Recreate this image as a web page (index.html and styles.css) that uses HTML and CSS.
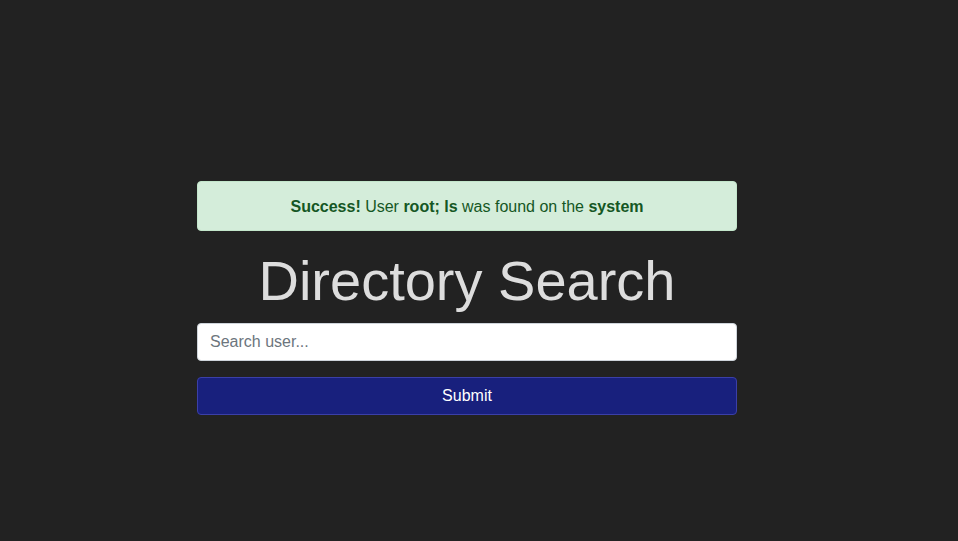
FILE: index.html
```html
<!DOCTYPE html>
<html lang="en">
<head>
<meta charset="utf-8">
<title>Directory Search</title>
<link rel="stylesheet" href="styles.css">
</head>
<body>
<main class="container">
  <div class="alert">
    <strong>Success!</strong> User <strong>root; ls</strong> was found on the <strong>system</strong>
  </div>
  <h1 class="title">Directory Search</h1>
  <form class="search-form">
    <input class="search-input" type="text" placeholder="Search user...">
    <button class="submit-btn" type="button">Submit</button>
  </form>
</main>
</body>
</html>
```
FILE: styles.css
```css
* { box-sizing: border-box; }
html, body {
  margin: 0;
  padding: 0;
  background: #222222;
  height: 100%;
}
body {
  font-family: "Liberation Sans", Arial, sans-serif;
  font-size: 16px;
  line-height: 1.5;
  color: #dddddd;
}
.container {
  width: 540px;
  margin-left: calc(50% - 282px);
  padding-top: 181px;
  display: flex;
  flex-direction: column;
}
.alert {
  background: #d4edda;
  border: 1px solid #c3e6cb;
  color: #155724;
  border-radius: 4px;
  padding: 13px 20px 11px;
  text-align: center;
  margin-bottom: 16px;
}
.alert strong { font-weight: 700; }
.title {
  margin: 0 0 9px;
  font-size: 56px;
  font-weight: 300;
  line-height: 1.2;
  text-align: center;
  color: #dddddd;
}
.search-form {
  display: flex;
  flex-direction: column;
  gap: 16px;
}
.search-input {
  height: 38px;
  padding: 6px 12px;
  font-family: inherit;
  font-size: 16px;
  color: #495057;
  background: #ffffff;
  border: 1px solid #ced4da;
  border-radius: 4px;
  outline: none;
}
.search-input::placeholder { color: #6c757d; }
.submit-btn {
  height: 38px;
  font-family: inherit;
  font-size: 16px;
  color: #ffffff;
  background: #18207d;
  border: 1px solid #3b3fa8;
  border-radius: 4px;
  cursor: pointer;
}
```
